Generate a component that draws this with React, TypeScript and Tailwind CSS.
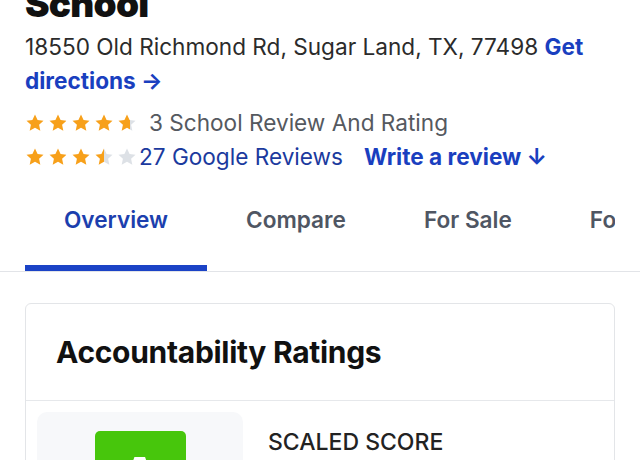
import { FC } from "react";

const Star: FC<{ fill: number }> = ({ fill }) => {
  // fill between 0 and 1
  const id = `g${Math.round(fill * 100)}`;
  return (
    <svg width="20" height="20" viewBox="0 0 24 24" className="shrink-0">
      <defs>
        <linearGradient id={id} x1="0" x2="1" y1="0" y2="0">
          <stop offset={fill} stopColor="#f7a01a" />
          <stop offset={fill} stopColor="#dde1e6" />
        </linearGradient>
      </defs>
      <path
        d="M12 1.8l3.1 6.6 7.1.8-5.3 4.9 1.5 7.1L12 17.6l-6.4 3.6 1.5-7.1L1.8 9.2l7.1-.8z"
        fill={`url(#${id})`}
      />
    </svg>
  );
};

const Stars: FC<{ values: number[] }> = ({ values }) => (
  <div className="flex items-center gap-[3px]">
    {values.map((v, i) => (
      <Star key={i} fill={v} />
    ))}
  </div>
);

const tabs = ["Overview", "Compare", "For Sale", "For Rent"];

const App: FC = () => {
  return (
    <div className="w-[640px] h-[460px] overflow-hidden bg-white font-['Inter',sans-serif]">
      <div className="px-[25px]">
        <h1 className="text-[37px] font-black leading-[36px] tracking-[-0.8px] text-[#111] -mt-[14px]">
          School
        </h1>
        <p className="mt-[8px] text-[22.6px] leading-[34px] text-[#2b2b2b]">
          18550 Old Richmond Rd, Sugar Land, TX, 77498{" "}
          <a className="font-bold text-[#1a3fbf]">Get directions →</a>
        </p>
        <div className="mt-[8px] flex items-center h-[34px]">
          <Stars values={[1, 1, 1, 1, 0.7]} />
          <span className="ml-[12px] text-[22.6px] text-[#55595f]">3 School Review And Rating</span>
        </div>
        <div className="flex items-center h-[34px]">
          <Stars values={[1, 1, 1, 0.5, 0]} />
          <span className="ml-[2px] text-[22.6px] text-[#1b3a9e]">27 Google Reviews</span>
          <span className="ml-[21px] text-[22.6px] font-bold text-[#1a3fbf]">Write a review ↓</span>
        </div>
      </div>

      <div className="mt-[18px] border-b border-[#e2e4e8]">
        <div className="mx-[25px] flex overflow-hidden w-[590px]">
          {tabs.map((t, i) => (
            <div
              key={t}
              className={`shrink-0 px-[39px] h-[79px] flex flex-col justify-between ${
                i === 0 ? "text-[#1c3fae]" : "text-[#4f5663]"
              }`}
            >
              <span className="pt-[13px] text-[22.6px] font-semibold leading-[30px]">{t}</span>
              {i === 0 && <div className="h-[6px] bg-[#1b43c6] -mx-[39px]" />}
            </div>
          ))}
        </div>
      </div>

      <div className="mx-[25px] mt-[31px] border border-[#e3e5e8] rounded-[6px]">
        <div className="h-[97px] px-[30px] flex items-center border-b border-[#e6e8eb]">
          <h2 className="text-[30px] font-bold text-[#111] tracking-[-0.3px]">Accountability Ratings</h2>
        </div>
        <div className="px-[11px] pt-[11px] flex">
          <div className="w-[206px] h-[120px] bg-[#f7f8fa] rounded-[10px] flex justify-center pt-[19px]">
            <div className="w-[91px] h-[90px] bg-[#47c60c] rounded-[5px] flex items-center justify-center text-white text-[54px] font-bold">
              A
            </div>
          </div>
          <div className="ml-[25px] pt-[17px]">
            <div className="text-[23px] font-medium text-[#222] leading-[26px]">SCALED SCORE</div>
          </div>
        </div>
      </div>
    </div>
  );
};

export default App;
